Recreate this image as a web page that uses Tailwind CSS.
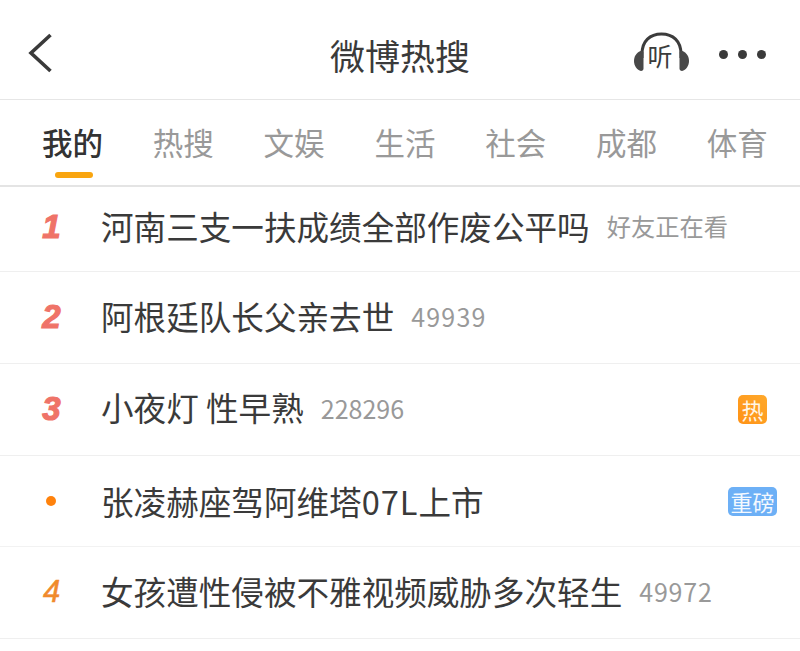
<!doctype html>
<html lang="zh">
<head>
<meta charset="utf-8">
<script src="https://cdn.jsdelivr.net/npm/@tailwindcss/browser@4"></script>
</head>
<body class="bg-white font-['Noto_Sans_CJK_SC','Noto_Sans',sans-serif] text-[#3a3a3a] overflow-hidden">
<div class="w-[800px] h-[651px] overflow-hidden">
  <header class="h-[100px] flex items-center justify-between border-b border-[#e6e6e6] relative">
    <svg class="ml-[27px] mt-[7px]" width="26" height="42" viewBox="0 0 26 42"><path d="M23.500 3 L4 21 L23.500 39" fill="none" stroke="#3a3a3a" stroke-width="3.6"/></svg>
    <h1 class="absolute left-[330px] top-[32px] text-[35px] leading-[46px] font-normal">微博热搜</h1>
    <div class="flex items-center mr-[34px] mt-[6px]">
      <div class="relative w-[58px] h-[42px] mr-[28px]">
        <svg class="absolute inset-0" width="58" height="42" viewBox="0 0 58 42">
          <path d="M9 26 V22 C9 9 17 2 28.500 2 C40 2 48 9 48 22 V26" fill="none" stroke="#3c3c3c" stroke-width="3"/>
          <path d="M7.500 19 C3 21 1 25 1 29 C1 34 4 38 8 39 C9.500 39 10.500 38 10.500 36.500 V21 C10.500 19.500 9 18.500 7.500 19 Z" fill="#484848"/>
          <path d="M49.500 19 C54 21 56 25 56 29 C56 34 53 38 49 39 C47.500 39 46.500 38 46.500 36.500 V21 C46.500 19.500 48 18.500 49.500 19 Z" fill="#484848"/>
        </svg>
        <span class="absolute left-[15px] top-[7px] text-[25px] leading-[32px] font-normal text-[#3c3c3c]">听</span>
      </div>
      <div class="flex gap-[9.500px] translate-y-[2px]">
        <span class="w-[9.500px] h-[9.500px] rounded-full bg-[#3a3a3a]"></span>
        <span class="w-[9.500px] h-[9.500px] rounded-full bg-[#3a3a3a]"></span>
        <span class="w-[9.500px] h-[9.500px] rounded-full bg-[#3a3a3a]"></span>
      </div>
    </div>
  </header>

  <nav class="h-[87px] flex gap-[49.800px] pl-[42px] pt-[20px] text-[30.500px] leading-[44px] text-[#999] border-b-2 border-[#e4e4e4] whitespace-nowrap relative">
    <span class="font-medium text-[#333]">我的</span>
    <span>热搜</span>
    <span>文娱</span>
    <span>生活</span>
    <span>社会</span>
    <span>成都</span>
    <span>体育</span>
    <span class="absolute left-[55px] top-[72px] w-[38px] h-[6px] rounded-full bg-[#f9a50f]"></span>
  </nav>

  <ul>
    <li class="h-[85px] flex items-center border-b border-[#efefef]">
      <span class="w-[103px] flex justify-center text-[33px] leading-none font-bold italic text-[#ef7368] [-webkit-text-stroke:1.200px_#ef7368] font-['Liberation_Sans'] -mt-[6px]">1</span>
      <span class="-ml-[2px] text-[32.600px] leading-[46px] whitespace-nowrap -mt-[6px]">河南三支一扶成绩全部作废公平吗</span>
      <span class="ml-[17px] text-[24.300px] leading-[34px] text-[#999] -mt-[6px]">好友正在看</span>
    </li>
    <li class="h-[92px] flex items-center border-b border-[#efefef]">
      <span class="w-[103px] flex justify-center text-[33px] leading-none font-bold italic text-[#ef7368] [-webkit-text-stroke:1.200px_#ef7368] font-['Liberation_Sans'] -mt-[3px]">2</span>
      <span class="-ml-[2px] text-[32.600px] leading-[46px] whitespace-nowrap -mt-[4px]">阿根廷队长父亲去世</span>
      <span class="ml-[17px] text-[25px] tracking-[1.200px] leading-[34px] text-[#999] -mt-[4px]">49939</span>
    </li>
    <li class="h-[92px] flex items-center border-b border-[#efefef]">
      <span class="w-[103px] flex justify-center text-[33px] leading-none font-bold italic text-[#ef7368] [-webkit-text-stroke:1.200px_#ef7368] font-['Liberation_Sans'] -mt-[3px]">3</span>
      <span class="-ml-[2px] text-[32.600px] leading-[46px] whitespace-nowrap -mt-[6px]">小夜灯 性早熟</span>
      <span class="ml-[17px] text-[25px] leading-[34px] text-[#999] -mt-[4px]">228296</span>
      <span class="ml-auto mr-[33px] w-[29px] h-[29px] rounded-[5px] bg-gradient-to-tr from-[#ff9214] to-[#ffa92b] text-[#fff6e6] text-[22px] leading-[28px] text-center">热</span>
    </li>
    <li class="h-[91px] flex items-center border-b border-[#f2f2f2]">
      <span class="w-[101px] flex justify-center"><span class="w-[10px] h-[10px] rounded-full bg-[#ff820c]"></span></span>
      <span class="text-[32.600px] leading-[46px] whitespace-nowrap -mt-[1px]">张凌赫座驾阿维塔<span class="tracking-[1px]">07L</span>上市</span>
      <span class="ml-auto mr-[23px] w-[49px] h-[29px] rounded-[5px] bg-[#6db0f6] text-[#f4f9ff] text-[22px] leading-[28px] text-center whitespace-nowrap">重磅</span>
    </li>
    <li class="h-[92px] flex items-center border-b border-[#efefef]">
      <span class="w-[103px] flex justify-center text-[31px] leading-none italic text-[#f08a2c] [-webkit-text-stroke:0.500px_#f08a2c] font-['Liberation_Sans'] -mt-[3px]">4</span>
      <span class="-ml-[2px] text-[32.600px] leading-[46px] whitespace-nowrap -mt-[4px]">女孩遭性侵被不雅视频威胁多次轻生</span>
      <span class="ml-[17px] text-[25px] tracking-[0.800px] leading-[34px] text-[#999] -mt-[4px]">49972</span>
    </li>
  </ul>
</div>
</body>
</html>
